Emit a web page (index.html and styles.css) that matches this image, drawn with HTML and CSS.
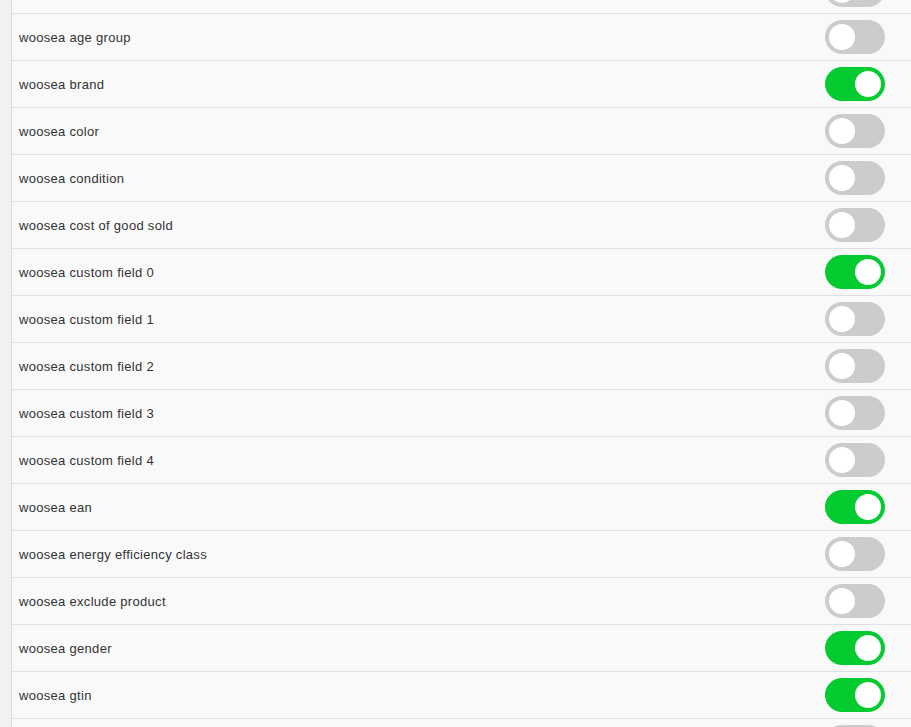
FILE: index.html
```html
<!DOCTYPE html>
<html lang="en">
<head>
    <meta charset="UTF-8">
    <meta name="viewport" content="width=device-width, initial-scale=1.0">
    <title>Attributes</title>
    <link rel="stylesheet" href="styles.css">
</head>
<body>
    <div class="attributes">
        <div class="row"><span class="label"></span><label class="switch"><input type="checkbox"><span class="slider"></span></label></div>
        <div class="row"><span class="label">woosea age group</span><label class="switch"><input type="checkbox"><span class="slider"></span></label></div>
        <div class="row"><span class="label">woosea brand</span><label class="switch"><input type="checkbox" checked><span class="slider"></span></label></div>
        <div class="row"><span class="label">woosea color</span><label class="switch"><input type="checkbox"><span class="slider"></span></label></div>
        <div class="row"><span class="label">woosea condition</span><label class="switch"><input type="checkbox"><span class="slider"></span></label></div>
        <div class="row"><span class="label">woosea cost of good sold</span><label class="switch"><input type="checkbox"><span class="slider"></span></label></div>
        <div class="row"><span class="label">woosea custom field 0</span><label class="switch"><input type="checkbox" checked><span class="slider"></span></label></div>
        <div class="row"><span class="label">woosea custom field 1</span><label class="switch"><input type="checkbox"><span class="slider"></span></label></div>
        <div class="row"><span class="label">woosea custom field 2</span><label class="switch"><input type="checkbox"><span class="slider"></span></label></div>
        <div class="row"><span class="label">woosea custom field 3</span><label class="switch"><input type="checkbox"><span class="slider"></span></label></div>
        <div class="row"><span class="label">woosea custom field 4</span><label class="switch"><input type="checkbox"><span class="slider"></span></label></div>
        <div class="row"><span class="label">woosea ean</span><label class="switch"><input type="checkbox" checked><span class="slider"></span></label></div>
        <div class="row"><span class="label">woosea energy efficiency class</span><label class="switch"><input type="checkbox"><span class="slider"></span></label></div>
        <div class="row"><span class="label">woosea exclude product</span><label class="switch"><input type="checkbox"><span class="slider"></span></label></div>
        <div class="row"><span class="label">woosea gender</span><label class="switch"><input type="checkbox" checked><span class="slider"></span></label></div>
        <div class="row"><span class="label">woosea gtin</span><label class="switch"><input type="checkbox" checked><span class="slider"></span></label></div>
        <div class="row"><span class="label"></span><label class="switch"><input type="checkbox"><span class="slider"></span></label></div>
    </div>
</body>
</html>
```

FILE: styles.css
```css
body {
    margin: 0;
    background: #f1f1f1;
    font-family: "Liberation Sans", Arial, sans-serif;
    font-size: 13px;
    letter-spacing: 0.3px;
    color: #333;
    overflow: hidden;
}
.attributes {
    margin-top: -33px;
    margin-left: 11px;
    border-left: 1px solid #dcdcdc;
    background: #f9f9f9;
}
.row {
    display: flex;
    align-items: center;
    justify-content: space-between;
    height: 46px;
    padding: 0 26px 0 7px;
    border-bottom: 1px solid #e1e1e1;
}
.switch {
    position: relative;
    display: inline-block;
    width: 60px;
    height: 34px;
}
.switch input {
    opacity: 0;
    width: 0;
    height: 0;
}
.slider {
    position: absolute;
    inset: 0;
    background: #cccccc;
    border-radius: 17px;
    cursor: pointer;
}
.slider::before {
    content: "";
    position: absolute;
    left: 4px;
    top: 4px;
    width: 26px;
    height: 26px;
    background: white;
    border-radius: 50%;
}
input:checked + .slider {
    background: #04cc30;
}
input:checked + .slider::before {
    transform: translateX(26px);
}
```
